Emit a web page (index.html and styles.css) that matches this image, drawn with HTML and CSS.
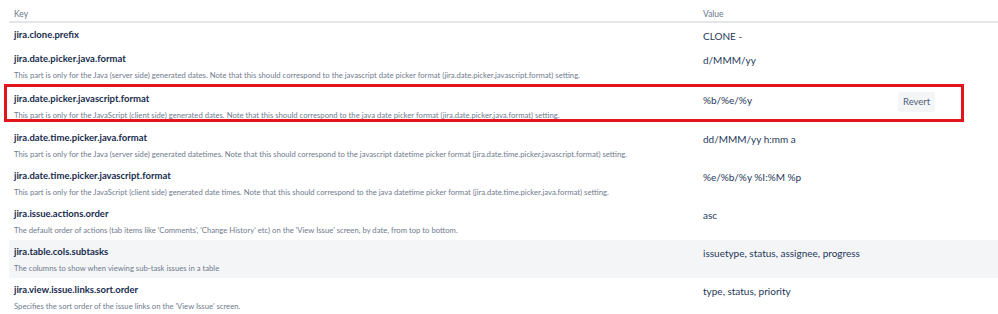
FILE: index.html
```html
<!DOCTYPE html>
<html>
<head>
<meta charset="utf-8">
<link rel="stylesheet" href="styles.css">
</head>
<body>
<div class="table">
  <div class="head">
    <div class="hcell">Key</div>
    <div class="hcell">Value</div>
    <div class="hcell"></div>
  </div>
  <div class="row short">
    <div class="cell"><div class="key">jira.clone.prefix</div></div>
    <div class="cell val">CLONE -</div>
    <div class="cell"></div>
  </div>
  <div class="row tall">
    <div class="cell"><div class="key">jira.date.picker.java.format</div><div class="desc">This part is only for the Java (server side) generated dates. Note that this should correspond to the javascript date picker format (jira.date.picker.javascript.format) setting.</div></div>
    <div class="cell val">d/MMM/yy</div>
    <div class="cell"></div>
  </div>
  <div class="row marked">
    <div class="cell"><div class="key">jira.date.picker.javascript.format</div><div class="desc">This part is only for the JavaScript (client side) generated dates. Note that this should correspond to the java date picker format (jira.date.picker.java.format) setting.</div></div>
    <div class="cell val">%b/%e/%y</div>
    <div class="cell act"><button class="revert">Revert</button></div>
    <div class="highlight"></div>
  </div>
  <div class="row">
    <div class="cell"><div class="key">jira.date.time.picker.java.format</div><div class="desc">This part is only for the Java (server side) generated datetimes. Note that this should correspond to the javascript datetime picker format (jira.date.time.picker.javascript.format) setting.</div></div>
    <div class="cell val">dd/MMM/yy h:mm a</div>
    <div class="cell"></div>
  </div>
  <div class="row">
    <div class="cell"><div class="key">jira.date.time.picker.javascript.format</div><div class="desc">This part is only for the JavaScript (client side) generated date times. Note that this should correspond to the java datetime picker format (jira.date.time.picker.java.format) setting.</div></div>
    <div class="cell val">%e/%b/%y %I:%M %p</div>
    <div class="cell"></div>
  </div>
  <div class="row">
    <div class="cell"><div class="key">jira.issue.actions.order</div><div class="desc">The default order of actions (tab items like 'Comments', 'Change History' etc) on the 'View Issue' screen, by date, from top to bottom.</div></div>
    <div class="cell val">asc</div>
    <div class="cell"></div>
  </div>
  <div class="row hover">
    <div class="cell"><div class="key">jira.table.cols.subtasks</div><div class="desc">The columns to show when viewing sub-task issues in a table</div></div>
    <div class="cell val">issuetype, status, assignee, progress</div>
    <div class="cell"></div>
  </div>
  <div class="row">
    <div class="cell"><div class="key">jira.view.issue.links.sort.order</div><div class="desc">Specifies the sort order of the issue links on the 'View Issue' screen.</div></div>
    <div class="cell val">type, status, priority</div>
    <div class="cell"></div>
  </div>
</div>
</body>
</html>
```
FILE: styles.css
```css
html, body {
  margin: 0;
  padding: 0;
  background: #ffffff;
}
body {
  font-family: Lato, "Noto Sans", sans-serif;
  color: #172b4d;
  overflow: hidden;
}
.table {
  margin-left: 9px;
  width: 1000px;
}
.head, .row {
  display: grid;
  grid-template-columns: 689px 195px 1fr;
}
.head {
  height: 23px;
  border-bottom: 2px solid #e4e6ea;
  box-sizing: border-box;
}
.hcell {
  font-size: 8.5px;
  color: #6b778c;
  padding: 7px 5px 0;
  line-height: 14px;
}
.row {
  position: relative;
  height: 38px;
}
.row.short { height: 24px; }
.row.tall { height: 40px; }
.row.marked { height: 39px; }
.row.hover { background: #f4f5f7; }
.cell {
  padding: 4px 5px 0;
  white-space: nowrap;
}
.key {
  font-weight: 700;
  font-size: 9.5px;
  line-height: 16px;
  color: #172b4d;
}
.desc {
  font-size: 7.7px;
  line-height: 16px;
  color: #707b8e;
}
.val {
  font-size: 10px;
  line-height: 16px;
  padding-top: 5px;
  color: #253858;
}
.act {
  padding-top: 5px;
}
.revert {
  display: block;
  margin: 0;
  font-family: Lato, "Noto Sans", sans-serif;
  font-size: 9.5px;
  color: #505f79;
  background: #f4f5f7;
  border: none;
  border-radius: 3px;
  padding: 0 5px;
  height: 20px;
  line-height: 20px;
}
.highlight {
  position: absolute;
  left: -5px;
  top: -3px;
  width: 960px;
  height: 38px;
  border: 3px solid #e3141d;
  box-sizing: border-box;
  pointer-events: none;
}
```
